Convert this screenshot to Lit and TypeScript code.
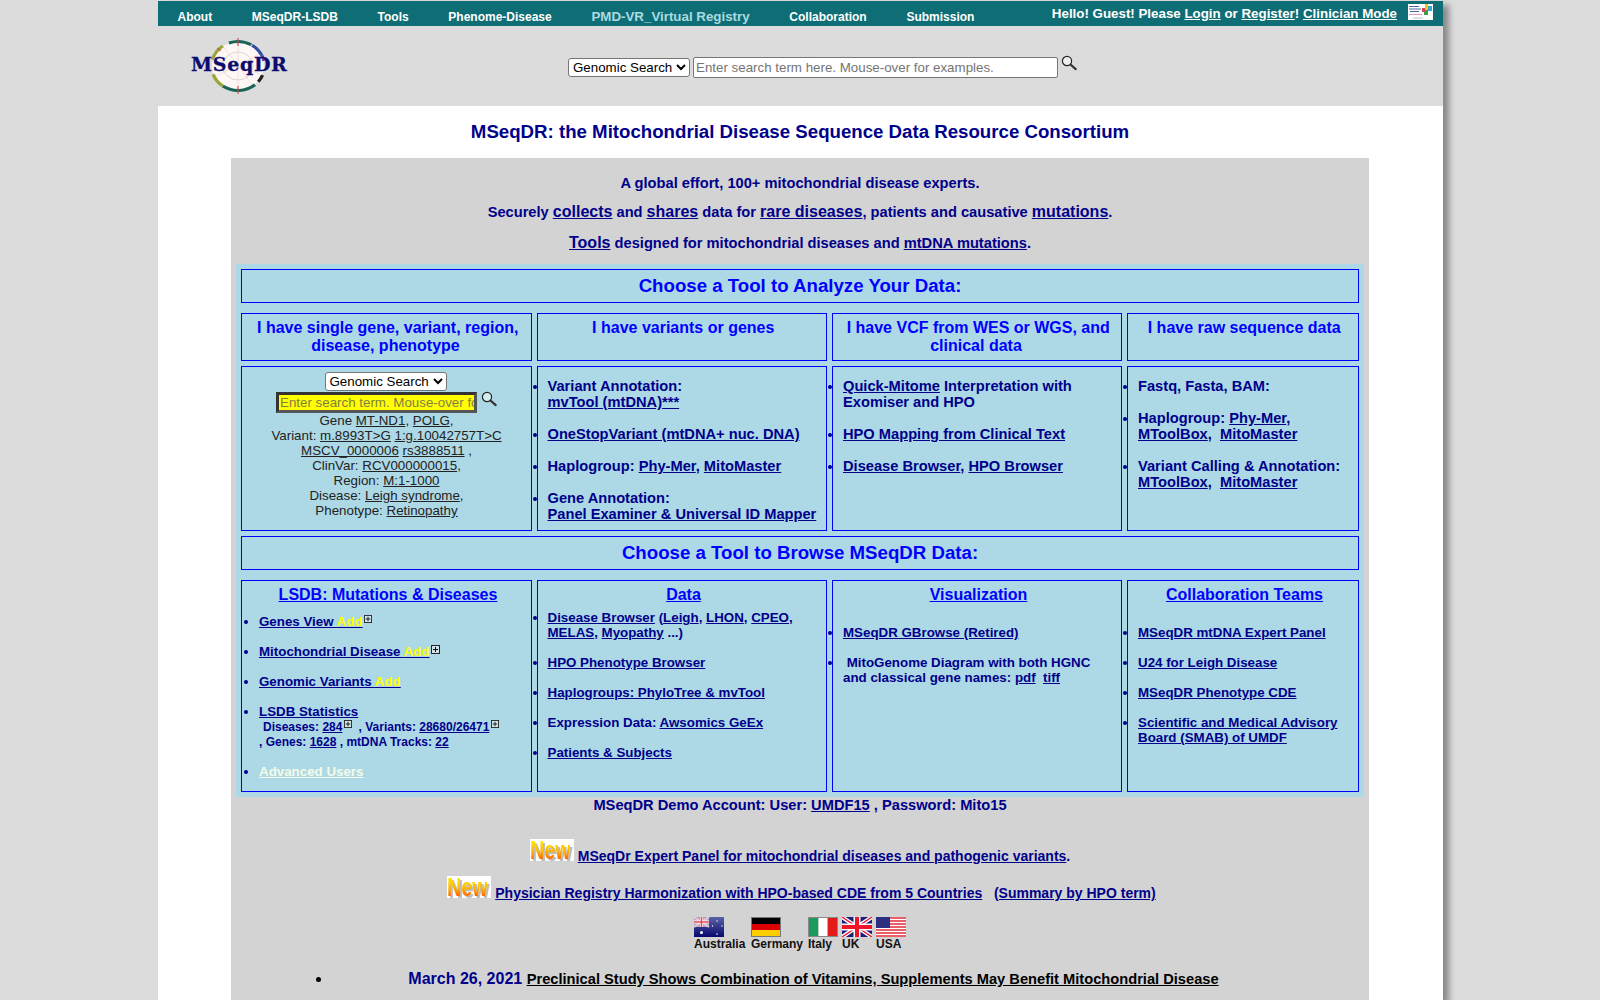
import { LitElement, html, css, svg } from "lit";
import { customElement } from "lit/decorators.js";

const mag = () => html`<svg class="mag" viewBox="0 0 16 16"><circle cx="6" cy="6" r="4.6" fill="#fff" fill-opacity=".5" stroke="#222" stroke-width="1.2"/><path d="M9.5 9.5l5.2 4.6" stroke="#333" stroke-width="2.2" stroke-linecap="round"/></svg>`;
const plus = html`<svg class="plus" viewBox="0 0 9 9"><rect x=".5" y=".5" width="8" height="8" fill="#cfe3e6" stroke="#222"/><path d="M2 4.5h5M4.5 2v5" stroke="#111"/></svg>`;
const NewBadge = html`<span class="new"><span class="newshadow">New</span><span class="newtext">New</span></span>`;

const arc = (r: number, a0: number, a1: number, c: string, w = 3) => {
  const p = (a: number) => `${50 + r * Math.cos((a * Math.PI) / 180)} ${30 + r * Math.sin((a * Math.PI) / 180)}`;
  return svg`<path d="M${p(a0)}A${r} ${r} 0 0 1 ${p(a1)}" fill="none" stroke=${c} stroke-width=${w}/>`;
};

const flags = {
  au: html`<svg class="flag" viewBox="0 0 30 20"><defs><linearGradient id="au" x1="0" y1="0" x2="0" y2="1"><stop offset="0" stop-color="#5c62a6"/><stop offset="1" stop-color="#07086e"/></linearGradient></defs><rect width="30" height="20" fill="url(#au)"/><rect width="15" height="10" fill="#a9a5c8"/><path d="M0 0l15 10M15 0L0 10" stroke="#e7c6d2" stroke-width="2"/><path d="M7.5 0v10M0 5h15" stroke="#fff" stroke-width="3"/><path d="M7.5 0v10M0 5h15" stroke="#e2495d" stroke-width="1.6"/><circle cx="7.5" cy="15.5" r="1.5" fill="#fff"/><circle cx="23" cy="4" r=".7" fill="#fff"/><circle cx="23" cy="17" r=".8" fill="#fff"/><circle cx="18.5" cy="9" r=".7" fill="#fff"/><circle cx="28" cy="9" r=".7" fill="#fff"/></svg>`,
  de: html`<svg class="flag" viewBox="0 0 30 20"><rect width="30" height="20" fill="#777"/><rect x="1" y="1" width="28" height="6" fill="#000"/><rect x="1" y="7" width="28" height="6" fill="#dd0000"/><rect x="1" y="13" width="28" height="6" fill="#ffce00"/></svg>`,
  it: html`<svg class="flag" viewBox="0 0 30 20"><rect width="30" height="20" fill="#888"/><rect x="1" y="1" width="9.4" height="18" fill="#1b9a5d"/><rect x="10.4" y="1" width="9.3" height="18" fill="#fff"/><rect x="19.7" y="1" width="9.3" height="18" fill="#e21a1a"/></svg>`,
  uk: html`<svg class="flag" viewBox="0 0 30 20"><rect width="30" height="20" fill="#1b1f7a"/><path d="M0 0l30 20M30 0L0 20" stroke="#fff" stroke-width="4"/><path d="M0 0l30 20M30 0L0 20" stroke="#f0142a" stroke-width="1.4"/><path d="M15 0v20M0 10h30" stroke="#fff" stroke-width="7"/><path d="M15 0v20M0 10h30" stroke="#f0142a" stroke-width="4"/></svg>`,
  us: html`<svg class="flag" viewBox="0 0 30 20"><rect width="30" height="20" fill="#fff"/><path d="M0 1h30M0 4h30M0 7h30M0 10h30M0 13h30M0 16h30M0 19h30" stroke="#e22b36" stroke-width="1.6"/><rect width="14" height="11" fill="#2c2f80"/></svg>`,
};

@customElement("app-root")
export class AppRoot extends LitElement {
  static styles = css`
    :host { display: block; height: 1000px; overflow: hidden; background: #dcdcdc; font-family: "Liberation Sans", Arial, sans-serif; }
    a { color: inherit; text-decoration: underline; }
    .page { width: 1285px; margin-left: 158px; margin-top: 1px; height: 999px; background: #fff; box-shadow: 6px 4px 6px #8a8a8a; display: flex; flex-direction: column; padding-top: 0; }
    .nav { height: 25px; background: #0f6e75; color: #fff; display: flex; align-items: flex-start; font-weight: bold; font-size: 12px; padding-left: 19.5px; flex: none; }
    .nav .it { margin-right: 39.7px; padding-top: 9px; line-height: 14px; }
    .nav .pmd { font-size: 13.33px; color: #a9dbe0; padding-top: 8px; line-height: 15px; }
    .user { margin-left: auto; display: flex; font-size: 13.33px; padding-top: 5px; line-height: 15px; }
    .user .chm { width: 25px; height: 16px; margin: -2px 10px 0 11px; background: #fff; }
    .head { height: 80px; background: #dcdcdc; position: relative; display: flex; flex: none; }
    .logo { width: 100px; height: 60px; margin: 10px 0 0 31px; flex: none; position: relative; }
    .logo svg { width: 100px; height: 60px; display: block; }
    .logotext { position: absolute; left: 2px; top: 17px; font: bold 19px "DejaVu Serif", serif; color: #0c0c6e; letter-spacing: 0.7px; -webkit-text-stroke: .3px #0c0c6e; white-space: nowrap; }
    .gs { position: absolute; left: 410px; top: 31px; display: flex; align-items: flex-start; }
    select { font: 13.33px "Liberation Sans", Arial, sans-serif; background: #fff; color: #000; border: 1px solid #767676; border-radius: 3px; height: 19px; padding: 0; box-sizing: border-box; }
    input { font: 13.33px "Liberation Sans", Arial, sans-serif; box-sizing: border-box; background: #fff; border: 1px solid #767676; border-radius: 2px; padding: 1px 2px; outline: none; }
    input::placeholder { color: #757575; }
    .gs select { width: 122px; height: 19px; margin-top: 1px; }
    .gs input { width: 365px; height: 21px; margin-left: 3px; }
    .mag { width: 16px; height: 16px; margin: -2px 0 0 3px; flex: none; }
    .title { flex: none; text-align: center; color: #00008b; font-weight: bold; font-size: 18.67px; line-height: 22px; padding: 15px 1px 15px 0; }
    .panel { flex: 1; margin: 0 74px 0 73px; background: #d3d3d3; color: #00008b; font-weight: bold; font-size: 14.67px; overflow: hidden; }
    .intro { text-align: center; padding-top: 17px; height: 106px; box-sizing: border-box; }
    .intro p { margin: 0; line-height: 17px; height: 17px; }
    .intro p + p { margin-top: 11px; }
    .intro p + p + p { margin-top: 14px; }
    .big { font-size: 16px; }
    .grid { background: #add8e6; padding: 5px; margin: 0 5px; display: grid; grid-template-columns: 291px 290px 290px 232px; column-gap: 5px; }
    .cell { border: 1px solid #0000ff; box-sizing: border-box; }
    .wide { grid-column: 1 / -1; height: 34px; text-align: center; color: #0000ff; font-size: 18.67px; line-height: 32px; margin-bottom: 10px; }
    .hd { height: 48px; margin-bottom: 5px; text-align: center; color: #0000ff; font-size: 16px; line-height: 18px; padding: 5px 11px 0 9px; }
    .r3 { height: 165px; margin-bottom: 5px; padding: 11px 0 0 0; font-size: 14.67px; line-height: 16px; }
    .r5 { height: 212px; }
    .search { padding: 5px 0 0; text-align: center; color: #222; font-weight: normal; font-size: 13.33px; line-height: 15px; }
    .search select { width: 122px; height: 19px; display: block; margin: 0 auto; position: relative; left: -1px; }
    .row2 { display: flex; margin: 1px 0 0 34px; height: 21px; align-items: flex-start; }
    .yellow { width: 201px; height: 21px; background: #ff0; border: 3px solid; border-color: #333 #555 #555 #333; border-radius: 0; padding: 0 0 0 1px; font-size: 13.33px; }
    .yellow::placeholder { color: #808040; }
    .row2 .mag { margin: -1px 0 0 4px; }
    ul { margin: 0; padding: 0 4px 0 10px; list-style: disc; }
    ul.n { padding-left: 9.5px; }
    .r5 ul { font-size: 13.33px; line-height: 15px; }
    .r5 h3 { margin: 0; text-align: center; color: #0000ff; font-size: 16px; line-height: 18px; padding: 5px 1.5px 0 0; }
    .r5 h3 a { color: #0000ff; }
    ul.a { padding: 0 0 0 17px; margin-top: 10px; }
    ul.b { margin-top: 6px; }
    ul.c { margin-top: 21px; }
    .plus { width: 8px; height: 8px; vertical-align: top; position: relative; top: 1px; margin-left: 1.5px; }
    .pb { width: 9px; height: 9px; }
    .yl { color: #ff0; }
    .adv { color: #f4fbe6; }
    .small { font-size: 12px; line-height: 13px; padding-left: 4px; }
    .small2 { font-size: 12px; line-height: 13px; }
    .demo { text-align: center; line-height: 17px; height: 20px; }
    .nw { display: flex; justify-content: center; align-items: flex-start; font-size: 14px; }
    .nw1 { margin-top: 22px; height: 37px; }
    .nw2 { height: 41px; padding-left: 3px; }
    .nw .lnk { margin: 9px 0 0 4px; line-height: 16px; white-space: pre; }
    .new { position: relative; width: 44px; height: 22px; background: #fff; display: block; font: bold 26px/22px "Liberation Sans", Arial, sans-serif; flex: none; }
    .newtext, .newshadow { position: absolute; left: 0; top: 0; transform: scaleX(.76); transform-origin: left top; }
    .newshadow { color: #bdbdbd; left: 2px; top: 2px; }
    .newtext { height: 22px; background: linear-gradient(#ffee00 5%, #ffb400 55%, #ff6a00 90%); -webkit-background-clip: text; background-clip: text; color: transparent; }
    .flags { display: flex; margin-left: 463px; font-size: 12px; color: #111; line-height: 14px; }
    .fl { display: flex; flex-direction: column; }
    .flag { width: 30px; height: 20px; display: block; }
    .fl span { white-space: nowrap; }
    .news { margin: 18px 0 0 0; padding-left: 27px; position: relative; height: 30px; text-align: center; font-size: 16px; line-height: 20px; }
    .news .dot { position: absolute; left: 85px; top: 8px; width: 5px; height: 5px; border-radius: 50%; background: #000; }
    .news a { color: #000; font-size: 14.67px; }
  `;

  render() {
    return html`<div class="page">
      <div class="nav">
        <span class="it">About</span><span class="it">MSeqDR-LSDB</span><span class="it">Tools</span><span class="it">Phenome-Disease</span><span class="it pmd">PMD-VR_Virtual Registry</span><span class="it">Collaboration</span><span class="it">Submission</span>
        <span class="user"><span>Hello! Guest! Please <a>Login</a> or <a>Register</a>! <a>Clinician Mode</a></span>
          <svg class="chm" viewBox="0 0 25 16"><rect width="25" height="16" fill="#fff"/><path d="M1 2.5h10M1 5h12M2 7.5h9" stroke="#4a6aa0" stroke-width="1"/><path d="M1 10.5h13" stroke="#d59abb" stroke-width="1"/><path d="M5 14h10" stroke="#9fb3c8" stroke-width=".8"/><rect x="17" y="0" width="3" height="6" fill="#f3c21b"/><rect x="20" y="2" width="4" height="5" fill="#35a7d6"/><rect x="16" y="6" width="4" height="5" fill="#3b9e4a"/><rect x="14" y="4" width="3" height="4" fill="#d9434e"/></svg></span>
      </div>
      <div class="head">
        <div class="logo">
          <svg viewBox="0 0 100 60">
            <g transform="translate(49 30) scale(1.08 1) translate(-50 -30)">
            <circle cx="50" cy="30" r="24" fill="#fdf7f5"/>
            <circle cx="50" cy="30" r="14" fill="none" stroke="#d9c5c5" stroke-width=".7"/>
            <path d="M28 22L70 38M30 40L70 18M50 6v48M36 10l28 40" stroke="#eccaca" stroke-width=".5" fill="none"/>
            ${arc(24.5, -110, -60, "#1a6355")}${arc(24.5, -58, -25, "#2f4fa0")}${arc(24.5, -25, -12, "#7d2d8a")}
            ${arc(24.5, 22, 40, "#222")}${arc(24.5, 50, 125, "#1a6355")}${arc(24.5, 125, 160, "#9aa63a")}${arc(24.5, 195, 235, "#9aa63a")}
            <path d="M50 2v8M50 50v8M31 12l3 3" stroke="#c44" stroke-width="1"/>
            </g>
          </svg>
          <span class="logotext">MSeqDR</span>
        </div>
        <div class="gs"><select><option>Genomic Search</option></select><input placeholder="Enter search term here. Mouse-over for examples." />${mag()}</div>
      </div>
      <div class="title">MSeqDR: the Mitochondrial Disease Sequence Data Resource Consortium</div>
      <div class="panel">
        <div class="intro">
          <p>A global effort, 100+ mitochondrial disease experts.</p>
          <p>Securely <a class="big">collects</a> and <a class="big">shares</a> data for <a class="big">rare diseases</a>, patients and causative <a class="big">mutations</a>.</p>
          <p><a class="big">Tools</a> designed for mitochondrial diseases and <a>mtDNA mutations</a>.</p>
        </div>
        <div class="grid">
          <div class="cell wide">Choose a Tool to Analyze Your Data:</div>
          <div class="cell hd">&nbsp;I have single gene, variant, region, disease, phenotype</div>
          <div class="cell hd">&nbsp;I have variants or genes</div>
          <div class="cell hd">&nbsp;I have VCF from WES or WGS, and clinical data</div>
          <div class="cell hd">&nbsp;I have raw sequence data</div>

          <div class="cell r3 search">
            <select><option>Genomic Search</option></select>
            <div class="row2"><input class="yellow" placeholder="Enter search term. Mouse-over for examples." />${mag()}</div>
            <div>Gene <a>MT-ND1</a>, <a>POLG</a>,<br />Variant: <a>m.8993T&gt;G</a> <a>1:g.10042757T&gt;C</a><br /><a>MSCV_0000006</a> <a>rs3888511</a> ,<br />ClinVar: <a>RCV000000015</a>,<br />Region: <a>M:1-1000</a><br />Disease: <a>Leigh syndrome</a>,<br />Phenotype: <a>Retinopathy</a></div>
          </div>
          <div class="cell r3"><ul class="n">
            <li>Variant Annotation:<br /><a>mvTool (mtDNA)***</a><br /><br /></li>
            <li><a>OneStopVariant (mtDNA+ nuc. DNA)</a><br /><br /></li>
            <li>Haplogroup: <a>Phy-Mer</a>, <a>MitoMaster</a><br /><br /></li>
            <li>Gene Annotation:<br /><a>Panel Examiner &amp; Universal ID Mapper</a></li>
          </ul></div>
          <div class="cell r3"><ul>
            <li><a>Quick-Mitome</a> Interpretation with Exomiser and HPO<br /><br /></li>
            <li><a>HPO Mapping from Clinical Text</a><br /><br /></li>
            <li><a>Disease Browser</a>, <a>HPO Browser</a></li>
          </ul></div>
          <div class="cell r3"><ul>
            <li>Fastq, Fasta, BAM:<br /><br /></li>
            <li>Haplogroup: <a>Phy-Mer</a>, <a>MToolBox</a>,&nbsp; <a>MitoMaster</a><br /><br /></li>
            <li>Variant Calling &amp; Annotation: <a>MToolBox</a>,&nbsp; <a>MitoMaster</a></li>
          </ul></div>

          <div class="cell wide">Choose a Tool to Browse MSeqDR Data:</div>

          <div class="cell r5"><h3>&nbsp;<a>LSDB: Mutations &amp; Diseases</a></h3><ul class="a">
            <li><a>Genes View <span class="yl">Add</span></a>${plus}<br /><br /></li>
            <li><a>Mitochondrial Disease <span class="yl">Add</span></a><svg class="plus pb" viewBox="0 0 9 9"><rect x=".5" y=".5" width="8" height="8" fill="#cfe3e6" stroke="#222"/><path d="M2 4.5h5M4.5 2v5" stroke="#111"/></svg><br /><br /></li>
            <li><a>Genomic Variants <span class="yl">Add</span></a><br /><br /></li>
            <li><a>LSDB Statistics</a><br /><span class="small">Diseases: <a>284</a>${plus} &nbsp;, Variants: <a>28680/26471</a>${plus}</span><br /><span class="small2">, Genes: <a>1628</a> , mtDNA Tracks: <a>22</a></span><br /><br /></li>
            <li><a class="adv">Advanced Users</a></li>
          </ul></div>
          <div class="cell r5"><h3>&nbsp;<a>Data</a></h3><ul class="b n">
            <li><a>Disease Browser</a> (<a>Leigh</a>, <a>LHON</a>, <a>CPEO</a>, <a>MELAS</a>, <a>Myopathy</a> ...)<br /><br /></li>
            <li><a>HPO Phenotype Browser</a><br /><br /></li>
            <li><a>Haplogroups: PhyloTree &amp; mvTool</a><br /><br /></li>
            <li>Expression Data: <a>Awsomics GeEx</a><br /><br /></li>
            <li><a>Patients &amp; Subjects</a></li>
          </ul></div>
          <div class="cell r5"><h3>&nbsp;<a>Visualization</a></h3><ul class="c">
            <li><a>MSeqDR GBrowse (Retired)</a><br /><br /></li>
            <li>&nbsp;MitoGenome Diagram with both HGNC and classical gene names: <a>pdf</a>&nbsp; <a>tiff</a></li>
          </ul></div>
          <div class="cell r5"><h3>&nbsp;<a>Collaboration Teams</a></h3><ul class="c">
            <li><a>MSeqDR mtDNA Expert Panel</a><br /><br /></li>
            <li><a>U24 for Leigh Disease</a><br /><br /></li>
            <li><a>MSeqDR Phenotype CDE</a><br /><br /></li>
            <li><a>Scientific and Medical Advisory Board (SMAB) of UMDF</a></li>
          </ul></div>
        </div>
        <div class="demo">MSeqDR Demo Account: User: <a>UMDF15</a> , Password: Mito15</div>
        <div class="nw nw1">${NewBadge}<span class="lnk"><a>MSeqDr Expert Panel for mitochondrial diseases and pathogenic variants</a>.</span></div>
        <div class="nw nw2">${NewBadge}<span class="lnk"><a>Physician Registry Harmonization with HPO-based CDE from 5 Countries</a>   <a>(Summary by HPO term)</a></span></div>
        <div class="flags">
          <div class="fl" style="width:57px">${flags.au}<span>Australia</span></div>
          <div class="fl" style="width:57px">${flags.de}<span>Germany</span></div>
          <div class="fl" style="width:34px">${flags.it}<span>Italy</span></div>
          <div class="fl" style="width:34px">${flags.uk}<span>UK</span></div>
          <div class="fl" style="width:34px">${flags.us}<span>USA</span></div>
        </div>
        <div class="news"><span class="dot"></span>March 26, 2021 <a>Preclinical Study Shows Combination of Vitamins, Supplements May Benefit Mitochondrial Disease</a></div>
      </div>
    </div>`;
  }
}
